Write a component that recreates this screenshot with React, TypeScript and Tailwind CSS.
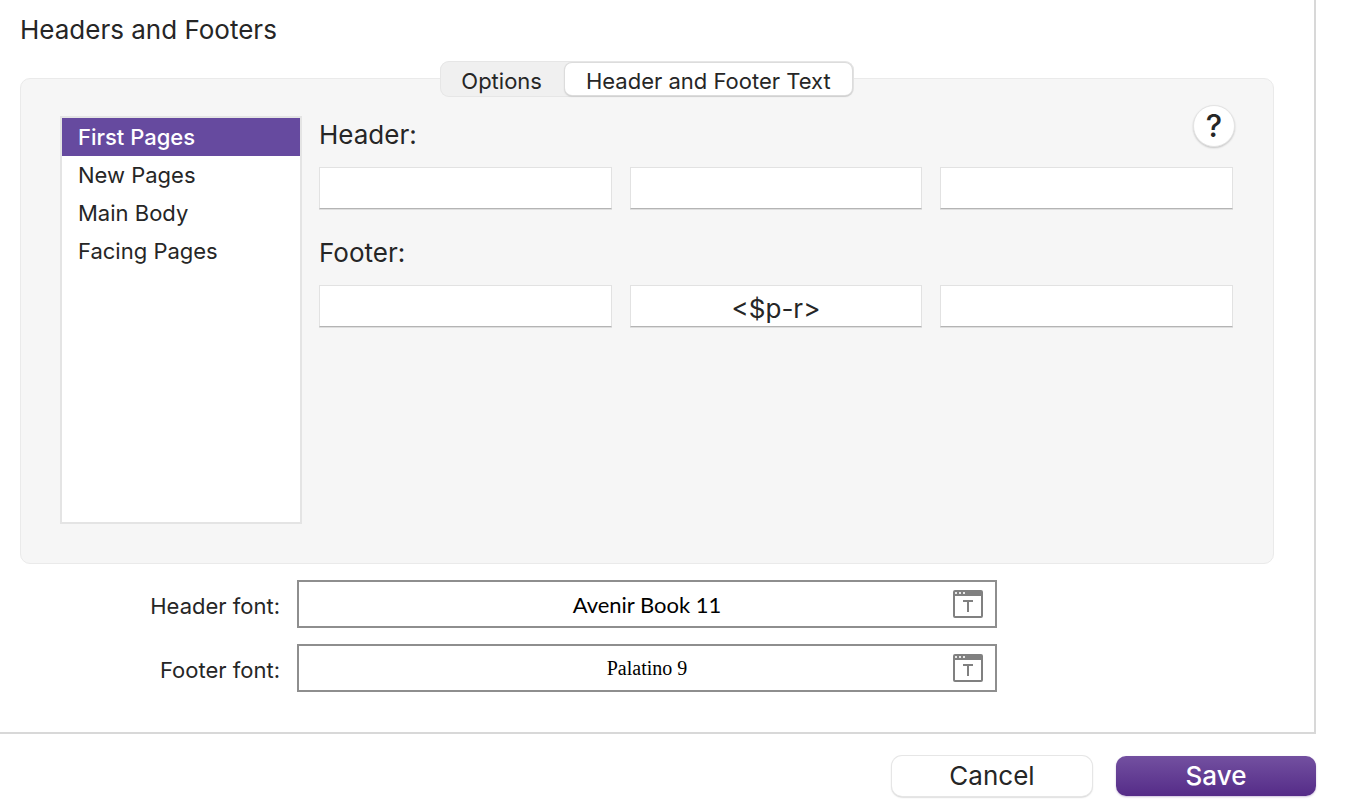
import { useState } from 'react';
import clsx from 'clsx';

const tabs = ['Options', 'Header and Footer Text'];

const pageTypes = ['First Pages', 'New Pages', 'Main Body', 'Facing Pages'];

const positions = ['left', 'center', 'right'];

function FontIcon() {
  return (
    <svg width="30" height="28" viewBox="0 0 30 28" fill="none" aria-hidden="true">
      <rect x="1" y="1" width="28" height="26" rx="1" stroke="#808080" strokeWidth="2" />
      <path d="M1 1h28v5H1z" fill="#808080" />
      <path d="M2 2h2v2H2zM6 2h2v2H6zM10 2h2v2h-2z" fill="#e8e8e8" />
      <path d="M10 11h10M15 11v11" stroke="#808080" strokeWidth="2" />
    </svg>
  );
}

function TextRow({ name, values }: { name: string; values: string[] }) {
  return (
    <div className="mt-4 grid grid-cols-3 gap-[18px]">
      {positions.map((position, i) => (
        <input
          key={position}
          type="text"
          aria-label={`${name} ${position}`}
          defaultValue={values[i]}
          className="h-[42px] w-full min-w-0 border border-[#e2e2e2] border-b-[#b4b4b4] bg-white px-2 pt-1 text-center text-[26px] shadow-[0_1px_0_#dedede] outline-none"
        />
      ))}
    </div>
  );
}

function FontField({ id, label, value, className }: { id: string; label: string; value: string; className: string }) {
  return (
    <div className="mt-4 grid grid-cols-[1fr_700px_1fr] items-center">
      <label htmlFor={id} className="pt-1 pr-[17px] text-right text-[22px]">
        {label}
      </label>
      <div className="relative h-12 border-2 border-[#8e8e8e] bg-white">
        <input
          id={id}
          type="text"
          readOnly
          defaultValue={value}
          className={clsx('h-full w-full text-center text-black outline-none', className)}
        />
        <button type="button" aria-label={`Choose ${label}`} className="absolute top-2 right-3">
          <FontIcon />
        </button>
      </div>
    </div>
  );
}

export default function App() {
  const [activeTab, setActiveTab] = useState(tabs[1]);
  const [selected, setSelected] = useState(pageTypes[0]);

  return (
    <div className="min-h-screen bg-white font-[Inter,sans-serif] text-[#262626]">
      <main className="mr-[30px] border-r-2 border-b-2 border-[#d8d8d8] pt-[14px] pr-10 pb-10 pl-5">
        <h1 className="text-[26px] leading-8">Headers and Footers</h1>

        <div
          role="tablist"
          className="relative z-10 mx-auto mt-[15px] -mb-[19px] flex h-9 w-fit rounded-[9px] bg-[#f0f0f0] shadow-[inset_0_0_0_1px_#e6e6e6]"
        >
          {tabs.map((tab) => (
            <button
              key={tab}
              type="button"
              role="tab"
              aria-selected={activeTab === tab}
              onClick={() => setActiveTab(tab)}
              className={clsx(
                'my-[2px] px-[21px] pt-[2px] text-[22px] leading-8',
                activeTab === tab &&
                  'mx-[2px] rounded-[7px] bg-white shadow-[0_0_0_1px_#dcdcdc,0_1px_2px_rgba(0,0,0,0.35)]'
              )}
            >
              {tab}
            </button>
          ))}
        </div>

        <section className="flex gap-[17px] rounded-[10px] border border-[#eaeaea] bg-[#f6f6f6] pt-[26px] pr-10 pb-[39px] pl-[39px]">
          <ul className="mt-[11px] h-[408px] w-[242px] shrink-0 border-2 border-[#e4e4e4] bg-white">
            {pageTypes.map((type) => (
              <li key={type}>
                <button
                  type="button"
                  onClick={() => setSelected(type)}
                  className={clsx(
                    'h-[38px] w-full px-4 text-left text-[22px]',
                    selected === type && 'bg-[#664a9f] font-medium text-white'
                  )}
                >
                  {type}
                </button>
              </li>
            ))}
          </ul>

          <div className="min-w-0 flex-1">
            <div className="-mr-[2px] flex h-[46px] items-start justify-between">
              <h2 className="self-end text-[26px] leading-8">Header:</h2>
              <button
                type="button"
                aria-label="Help"
                className="size-[42px] rounded-full border border-[#e4e4e4] bg-white text-[31px] leading-10 font-medium shadow-[0_1px_2px_rgba(0,0,0,0.2)]"
              >
                ?
              </button>
            </div>
            <TextRow name="Header" values={['', '', '']} />

            <h2 className="mt-7 text-[26px] leading-8">Footer:</h2>
            <TextRow name="Footer" values={['', '<$p-r>', '']} />
          </div>
        </section>

        <FontField id="header-font" label="Header font:" value="Avenir Book 11" className="font-[Lato,sans-serif] text-[22px]" />
        <FontField id="footer-font" label="Footer font:" value="Palatino 9" className="font-['Liberation_Serif',serif] text-[20px]" />
      </main>

      <footer className="mt-[22px] mr-[30px] flex justify-end gap-6">
        <button
          type="button"
          className="h-10 w-[200px] rounded-[10px] bg-white text-[26px] leading-[38px] shadow-[0_0_0_1px_#e6e6e6,0_1px_2px_rgba(0,0,0,0.4)]"
        >
          Cancel
        </button>
        <button
          type="button"
          className="h-10 w-[200px] rounded-[10px] bg-linear-to-b from-[#7350a0] to-[#552b88] text-[26px] leading-[38px] font-medium text-white shadow-[0_1px_2px_rgba(85,43,136,0.3)]"
        >
          Save
        </button>
      </footer>
    </div>
  );
}
